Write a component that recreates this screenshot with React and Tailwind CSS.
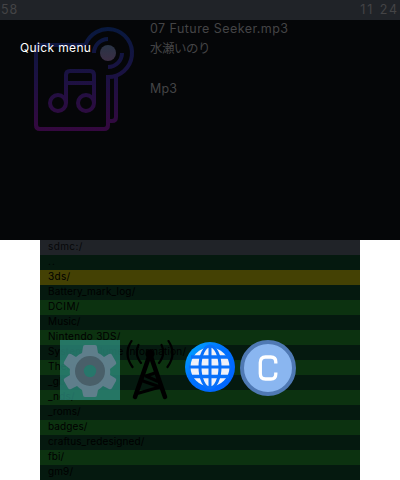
const FILES = [
  { name: '..', tracking: 'tracking-[1px]' },
  { name: '3ds/', tracking: 'tracking-[0.3px]' },
  { name: 'Battery_mark_log/', tracking: 'tracking-[0.16px]' },
  { name: 'DCIM/', tracking: 'tracking-[0.4px]' },
  { name: 'Music/', tracking: 'tracking-[0.1px]' },
  { name: 'Nintendo 3DS/', tracking: 'tracking-[0.27px]' },
  { name: 'System Volume Information/', tracking: 'tracking-[0.18px]' },
  { name: 'Themes/', tracking: 'tracking-[0.2px]' },
  { name: '_gba/', tracking: 'tracking-[0.2px]' },
  { name: '_nds/', tracking: 'tracking-[0.2px]' },
  { name: '_roms/', tracking: 'tracking-[0.1px]' },
  { name: 'badges/', tracking: 'tracking-[0.1px]' },
  { name: 'craftus_redesigned/', tracking: 'tracking-[0.1px]' },
  { name: 'fbi/', tracking: 'tracking-[0.1px]' },
  { name: 'gm9/', tracking: 'tracking-[0.1px]' },
];

function rowColor(i) {
  if (i === 1) return 'bg-[#444104]';
  return i % 2 ? 'bg-[#0c3210]' : 'bg-[#05190f]';
}

function AlbumArt() {
  return (
    <svg width="120" height="120" viewBox="20 20 120 120" fill="none">
      <defs>
        <linearGradient id="art" gradientUnits="userSpaceOnUse" x1="0" y1="27" x2="0" y2="131">
          <stop offset="0" stopColor="#08193f" />
          <stop offset="0.5" stopColor="#1c1142" />
          <stop offset="1" stopColor="#35083f" />
        </linearGradient>
        <linearGradient id="hub" x1="0" y1="0" x2="0" y2="1">
          <stop offset="0" stopColor="#293446" />
          <stop offset="1" stopColor="#3b2e44" />
        </linearGradient>
      </defs>
      <g stroke="url(#art)" strokeWidth="4">
        <path d="M86 45H40Q36 45 36 49V125Q36 129 40 129H104Q108 129 108 125V77A24 24 0 1 0 85.4 45" />
        <path d="M116 75V117Q116 121 112 121H109" />
        <path d="M94 53A14 14 0 0 1 108 39M122 53A14 14 0 0 1 108 67" />
        <path d="M66 103V75Q66 71 70 71H90Q94 71 94 75V103M66 83H94" />
        <circle cx="58" cy="103" r="8" />
        <circle cx="86" cy="103" r="8" />
      </g>
      <circle cx="108" cy="53" r="8" fill="url(#hub)" />
    </svg>
  );
}

function GearIcon() {
  return (
    <svg width="60" height="60" viewBox="0 0 60 60">
      <path fill="#2b8577" fillOpacity="0.82" d="M0 0H60V60H0Z" />
      <path
        fill="#627f8d"
        fillOpacity="0.96"
        d="M25 5H35Q37 5 37 7L38 13Q41 14 44 17L49 14Q51 13 52 15L56 22Q57 24 55 25L50 29Q50.500 32 50 35L55 38Q57 39 56 41L52 48Q51 50 49 49L43 46Q41 48 38 50L37 55Q37 57 35 57H25Q23 57 23 55L22 50Q19 48 17 46L11 49Q9 50 8 48L4 41Q3 39 5 38L10 35Q9.500 32 10 29L5 25Q3 24 4 22L8 15Q9 13 11 14L16 17Q19 14 22 13L23 7Q23 5 25 5Z"
      />
      <circle cx="30" cy="31" r="15" fill="#495f69" />
      <circle cx="30" cy="31" r="6.200" fill="#27776b" />
    </svg>
  );
}

function AntennaIcon() {
  return (
    <svg width="60" height="60" viewBox="0 0 60 60" fill="none" stroke="#000" strokeLinecap="round">
      <path strokeWidth="4.500" d="M30 14L15 57M30 14L45 57" />
      <path strokeWidth="3.200" strokeLinejoin="round" d="M26 36L35 33M26 36L37 41M19 53L40 47L23 41" />
      <circle cx="30" cy="14" r="4.500" fill="#000" stroke="none" />
      <path strokeWidth="2.200" d="M18.500 5Q14 14 21 23M11.500 1Q3 14 12.500 27M41.500 5Q46 14 39 23M48.500 1Q57 14 47.500 27" />
    </svg>
  );
}

function GlobeIcon() {
  return (
    <svg width="60" height="60" viewBox="0 0 60 60">
      <defs>
        <linearGradient id="globe" x1="0" y1="0" x2="1" y2="1">
          <stop offset="0" stopColor="#00b0ff" />
          <stop offset="0.4" stopColor="#0074ff" />
          <stop offset="1" stopColor="#0060ff" />
        </linearGradient>
      </defs>
      <circle cx="30" cy="27" r="25" fill="url(#globe)" />
      <circle cx="30" cy="27" r="19.500" fill="#f0f1f8" />
      <g fill="none" stroke="#0870fa">
        <path strokeWidth="3" d="M30 6V48M9 27H51" />
        <path strokeWidth="3.500" d="M11 17H49M11 36.500H49" />
        <ellipse cx="30" cy="27" rx="10" ry="21" strokeWidth="3" />
      </g>
    </svg>
  );
}

function CIcon() {
  return (
    <div className="flex size-14 items-center justify-center rounded-full border-[4px] border-[#4f79b4] bg-[#8ab6f0]">
      <svg width="20" height="28" viewBox="0 0 20 28" fill="none" stroke="#fff" strokeWidth="3.300">
        <path d="M17.800 9.500V8Q17.800 3 12.800 3H7.500Q2.300 3 2.300 8.500V19.500Q2.300 25 7.500 25H12.800Q17.800 25 17.800 20V18.500" />
      </svg>
    </div>
  );
}

export default function App() {
  return (
    <div className="relative flex h-[480px] w-[400px] flex-col overflow-hidden bg-white font-['Inter','Noto_Sans_CJK_JP',sans-serif]">
      <section className="h-60 bg-[#050608] text-[12.5px] text-[#444446]">
        <header className="flex h-5 justify-between bg-[#202328] pr-[1px] pl-px leading-[19px]">
          <span className="tracking-[0.8px]">58</span>
          <span className="tracking-[1.9px]">11 24</span>
        </header>
        <div className="flex">
          <div className="w-[150px] pl-5">
            <AlbumArt />
          </div>
          <div className="leading-5">
            <p className="-mt-px tracking-[0.44px]">07 Future Seeker.mp3</p>
            <p className="-tracking-[0.5px]">水瀬いのり</p>
            <p className="mt-5 tracking-[0.1px]">Mp3</p>
          </div>
        </div>
      </section>
      <section className="mx-10 h-60 text-[10px] leading-[13px] text-black">
        <div className="h-[15px] bg-[#202328] pl-2 tracking-[0.400px] text-[#060708]">sdmc:/</div>
        {FILES.map((file, i) => (
          <div key={file.name} className={`h-[15px] pl-2 whitespace-pre ${file.tracking} ${rowColor(i)}`}>
            {file.name}
          </div>
        ))}
      </section>
      <div className="absolute top-[38px] left-5 text-[12px] leading-5 tracking-[0.36px] text-white">Quick menu</div>
      <nav className="absolute top-[340px] left-[60px] flex">
        <GearIcon />
        <AntennaIcon />
        <GlobeIcon />
        <CIcon />
      </nav>
    </div>
  );
}
